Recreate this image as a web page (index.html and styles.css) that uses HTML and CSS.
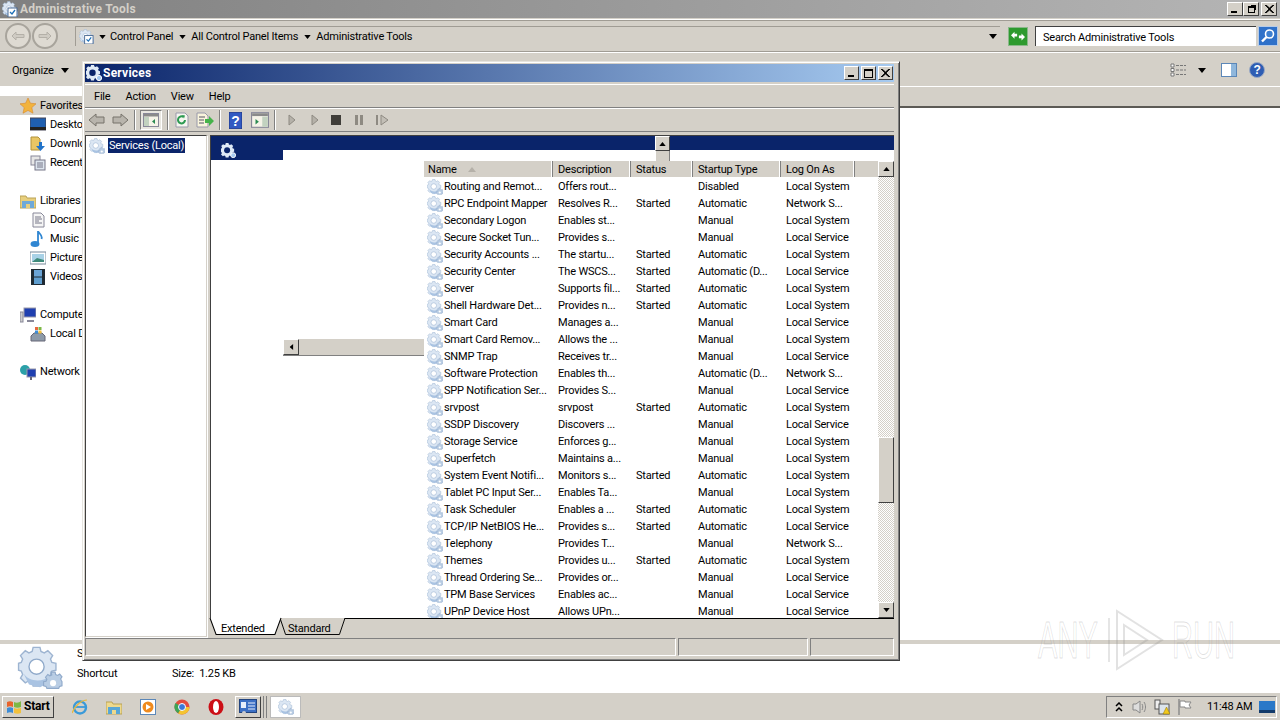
FILE: index.html
```html
<!DOCTYPE html>
<html lang="en">
<head>
<meta charset="utf-8">
<title>Administrative Tools</title>
<link rel="stylesheet" href="styles.css">
</head>
<body>
<svg class="defs" width="0" height="0" aria-hidden="true">
  <defs>
    <symbol id="gear" viewBox="0 0 32 32">
      <path fill="#dbe6f3" stroke="#9db4d1" stroke-width="1" d="M11 1h5l.7 3 2.400 1 2.600-1.600 3.500 3.500L23.600 9.500l1 2.400 3 .7v5l-3 .7-1 2.400 1.600 2.600-3.500 3.500-2.600-1.600-2.400 1-.7 3h-5l-.7-3-2.400-1-2.600 1.600-3.500-3.500L3.400 20.700l-1-2.400-2-.7v-5l2-.7 1-2.400L1.800 6.900l3.500-3.500L7.900 5l2.400-1z"/>
      <path d="M4 20c4 6 14 7 20 1l-2 6-6 3-8-2z" fill="#a9c3e2"/>
      <circle cx="13.500" cy="15" r="5.500" fill="#fff" stroke="#8fa9ca"/>
      <path fill="#b9cde4" stroke="#8fa9ca" stroke-width=".8" d="M24 19h3l.4 1.800 1.400.6 1.500-1 1.700 2-1 1.500.6 1.400L32 26v3l-1.800.4-.6 1.400H21l-.6-1.400-1.800-.4v-3l1.800-.4.600-1.400-1-1.500 1.700-2 1.500 1 1.400-.6z"/>
      <circle cx="25.500" cy="27" r="2.200" fill="#fff"/>
    </symbol>
    <symbol id="gear-white" viewBox="0 0 16 16">
      <path fill="#dfeaf6" d="M5 0h3l.4 1.600 1.200.5L11 1.200 13 3.200l-.9 1.400.5 1.200L14 6.200v3l-1.400.4-.5 1.200.9 1.400-2 2-1.400-.9-1.200.5L8 15.400H5l-.4-1.600-1.200-.5-1.400.9-2-2 .9-1.400-.5-1.200L-1 9.200v-3l1.600-.4.500-1.200-.9-1.400 2-2 1.400.9 1.200-.5z"/>
      <circle cx="6.500" cy="7.700" r="3.200" fill="#0a246a"/>
      <circle cx="13" cy="13" r="2.600" fill="#a6caf0" stroke="#fff"/>
    </symbol>
    <symbol id="tri-down" viewBox="0 0 8 5"><path d="M0 0h8L4 5z"/></symbol>
    <symbol id="cap-x" viewBox="0 0 9 8"><path d="M1 0l3.500 3L8 0h1L5 4l4 4H8L4.500 5 1 8H0l4-4-4-4z" stroke="#000" stroke-width=".8"/></symbol>
  </defs>
</svg>

<div class="explorer">
  <header class="ex-title">
    <svg class="ex-title-icon" viewBox="0 0 16 16"><use href="#gear"/><rect x="6" y="7" width="9" height="9" fill="#fff" stroke="#4a6a94"/><path d="M8 11l2 2 3-4" fill="none" stroke="#1d6fb8" stroke-width="1.300"/></svg>
    <span class="ex-title-text">Administrative Tools</span>
    <div class="ex-title-btns">
      <span class="cap-btn"><i class="cap-min"></i></span>
      <span class="cap-btn"><i class="cap-restore"></i></span>
      <span class="cap-btn cap-close"><svg class="cap-x-icon"><use href="#cap-x"/></svg></span>
    </div>
  </header>

  <div class="ex-address">
    <div class="nav-btns">
      <span class="round-btn"><svg viewBox="0 0 14 10"><path d="M1 5l4-4v2.500h8v3H5V9z" fill="#cfcbc3" stroke="#b4b0a8"/></svg></span>
      <span class="round-btn"><svg viewBox="0 0 14 10"><path d="M13 5L9 1v2.500H1v3h8V9z" fill="#cfcbc3" stroke="#b4b0a8"/></svg></span>
    </div>
    <div class="crumbs">
      <svg class="crumb-icon" viewBox="0 0 16 16"><use href="#gear"/><rect x="6" y="7" width="9" height="9" fill="#fff" stroke="#4a6a94"/><path d="M8 11l2 2 3-4" fill="none" stroke="#1d6fb8" stroke-width="1.300"/></svg>
      <svg class="tri"><use href="#tri-down"/></svg><span>Control Panel</span>
      <svg class="tri"><use href="#tri-down"/></svg><span>All Control Panel Items</span>
      <svg class="tri"><use href="#tri-down"/></svg><span>Administrative Tools</span>
      <svg class="tri tri-end"><use href="#tri-down"/></svg>
    </div>
    <span class="go-btn"><svg viewBox="0 0 18 16"><path d="M1 7l4-4v2.500h3v3H5V11zM17 9l-4 4v-2.500h-3v-3h3V5z" fill="#fff"/></svg></span>
    <div class="search-box">Search Administrative Tools</div>
    <span class="search-btn"><svg viewBox="0 0 16 16"><circle cx="9.500" cy="6" r="4" fill="#3d7fd0" stroke="#fff" stroke-width="1.600"/><path d="M6.500 9L2 13.500" stroke="#fff" stroke-width="2.400"/></svg></span>
  </div>

  <div class="ex-toolbar">
    <span class="organize">Organize</span><svg class="tri tri-org"><use href="#tri-down"/></svg>
    <div class="ex-tools">
      <svg class="view-icon" viewBox="0 0 16 14"><path d="M1 1h3v3H1zM1 5.500h3v3H1zM1 10h3v3H1z" fill="#fff" stroke="#777"/><path d="M6 2.500h10M6 7h10M6 11.500h10" stroke="#777" stroke-dasharray="3 1"/></svg>
      <svg class="tri"><use href="#tri-down"/></svg>
      <svg class="preview-icon" viewBox="0 0 16 14"><rect x=".5" y=".5" width="15" height="13" fill="#fff" stroke="#5b87b8"/><rect x="10" y="1" width="5" height="12" fill="#8fb7dc"/></svg>
      <svg class="help-icon" viewBox="0 0 16 16"><circle cx="8" cy="8" r="7.500" fill="#2e5db3" stroke="#9aa9c4"/><text x="8" y="12" text-anchor="middle" class="help-q">?</text></svg>
    </div>
  </div>

  <div class="ex-body">
    <nav class="ex-nav">
      <div class="nav-item nav-top nav-sel"><svg class="ni" viewBox="0 0 16 16"><path d="M8 0l2.400 5.200 5.600.6-4.200 3.800 1.200 5.600L8 12.400 3 15.200l1.200-5.600L0 5.800l5.600-.6z" fill="#f2b33d" stroke="#d8882a" stroke-width=".6"/></svg>Favorites</div>
      <div class="nav-item"><svg class="ni" viewBox="0 0 16 16"><rect y="1" width="16" height="12" fill="#1f5fb0" stroke="#445"/><rect y="10" width="16" height="3" fill="#222"/></svg>Desktop</div>
      <div class="nav-item"><svg class="ni" viewBox="0 0 16 16"><path d="M1 1h7l2 2v11H1z" fill="#e9c664" stroke="#b1923c"/><path d="M9 6h3v4h3l-4.500 5L6 10h3z" fill="#2273c9"/></svg>Downloads</div>
      <div class="nav-item"><svg class="ni" viewBox="0 0 16 16"><rect x="1" y="1" width="9" height="9" fill="#e6e6e6" stroke="#889"/><rect x="5" y="5" width="10" height="10" fill="#dde5ee" stroke="#778"/><path d="M7 8h6M7 10h6M7 12h6" stroke="#778"/></svg>Recent Places</div>

      <div class="nav-item nav-top nav-gap"><svg class="ni" viewBox="0 0 16 16"><path d="M0 3h6l1 2h9v10H0z" fill="#e8cf7d" stroke="#b9a257"/><path d="M2 8h12v7H2z" fill="#6fa9d9"/><path d="M6 15v-4h4v4" fill="#e8cf7d"/></svg>Libraries</div>
      <div class="nav-item"><svg class="ni" viewBox="0 0 16 16"><path d="M3 1h8l3 3v11H3z" fill="#f5f5f5" stroke="#889"/><path d="M5 5h6M5 7h7M5 9h4M5 11h7" stroke="#778"/></svg>Documents</div>
      <div class="nav-item"><svg class="ni" viewBox="0 0 16 16"><ellipse cx="5" cy="13" rx="4.500" ry="3" fill="#2f86d2"/><path d="M8 13V0c1 3 5 4 3.500 8" fill="none" stroke="#2f86d2" stroke-width="1.800"/></svg>Music</div>
      <div class="nav-item"><svg class="ni" viewBox="0 0 16 16"><rect y="2" width="16" height="12" fill="#fff" stroke="#789"/><rect x="2" y="4" width="12" height="8" fill="#a8d1e6"/><path d="M2 12l5-4 7 2v2z" fill="#3e8a7a"/></svg>Pictures</div>
      <div class="nav-item"><svg class="ni" viewBox="0 0 16 16"><rect x="1" width="14" height="16" fill="#1f2a33"/><rect x="4" y="1" width="8" height="6.500" fill="#6aa4d6"/><rect x="4" y="8.500" width="8" height="6.500" fill="#5f9ecf"/></svg>Videos</div>

      <div class="nav-item nav-top nav-gap"><svg class="ni" viewBox="0 0 16 16"><rect x="4" y="1" width="12" height="9" fill="#1f3fb0" stroke="#99a"/><rect x="0" y="5" width="3" height="10" fill="#ccc" stroke="#889"/><path d="M7 14h7" stroke="#889" stroke-width="2"/></svg>Computer</div>
      <div class="nav-item"><svg class="ni" viewBox="0 0 16 16"><path d="M1 10l3-3h8l3 3v5H1z" fill="#8d9aa8" stroke="#667"/><rect x="5" y="1" width="3" height="3" fill="#e8683c"/><rect x="8.500" y="1" width="3" height="3" fill="#7db845"/><rect x="5" y="4.500" width="3" height="3" fill="#3d8cd6"/><rect x="8.500" y="4.500" width="3" height="3" fill="#f2c13d"/></svg>Local Disk (C:)</div>

      <div class="nav-item nav-top nav-gap"><svg class="ni" viewBox="0 0 16 16"><circle cx="5" cy="6" r="5" fill="#2ba0a8"/><rect x="7" y="5" width="9" height="8" fill="#1f3fb0" stroke="#99a"/><path d="M11 13v3" stroke="#667" stroke-width="2"/></svg>Network</div>
    </nav>
    <div class="ex-files"><div class="ex-headbar"></div></div>
  </div>

  <div class="ex-split"></div>
  <div class="ex-details">
    <svg class="big-gear"><use href="#gear"/></svg>
    <div class="det-text">
      <div class="det-name">Services</div>
      <div class="det-meta"><span class="det-type">Shortcut</span><span>Size:&nbsp; 1.25 KB</span></div>
    </div>
  </div>
</div>

<footer class="taskbar">
  <span class="start"><svg viewBox="0 0 16 16"><path d="M1 3c2-1 4-1 6 0v5c-2-1-4-1-6 0z" fill="#e8632c"/><path d="M8 3c2 1 5 1 7-1v6c-2 1-5 1-7 0z" fill="#7db845"/><path d="M1 9c2-1 4-1 6 0v5c-2-1-4-1-6 0z" fill="#3d8cd6"/><path d="M8 9c2 1 5 1 7-.500V14c-2 1-5 1-7 0z" fill="#f2c13d"/></svg>Start</span>
  <div class="quick">
    <svg class="qi" viewBox="0 0 16 16"><circle cx="8" cy="8.500" r="6" fill="none" stroke="#3a9ad9" stroke-width="2.400"/><path d="M3 8h10" stroke="#3a9ad9" stroke-width="1.800"/><path d="M0 14C3 6 10 1 15 1" fill="none" stroke="#e8b93d" stroke-width="1.200"/></svg>
    <svg class="qi" viewBox="0 0 16 16"><path d="M0 3h6l1 2h9v10H0z" fill="#eed98d" stroke="#b9a257"/><path d="M2 8h12v7H2z" fill="#58a6d6"/><path d="M6 15v-4h4v4" fill="#eed98d"/></svg>
    <svg class="qi" viewBox="0 0 16 16"><rect x=".5" y=".5" width="15" height="15" fill="#fff" stroke="#5b87b8"/><circle cx="8" cy="8" r="5.500" fill="#ef8a1d"/><path d="M6 5l5 3-5 3z" fill="#fff"/></svg>
    <svg class="qi" viewBox="0 0 16 16"><circle cx="8" cy="8" r="7.500" fill="#e44c3d"/><path d="M8 8L15.500 8A7.500 7.500 0 0 1 4 14.300z" fill="#f4c430"/><path d="M8 8L4 14.300A7.500 7.500 0 0 1 1.500 4z" fill="#3da556"/><circle cx="8" cy="8" r="3.500" fill="#3b78d8" stroke="#fff"/></svg>
    <svg class="qi" viewBox="0 0 16 16"><ellipse cx="8" cy="8" rx="7.500" ry="8" fill="#cc0f16"/><ellipse cx="8" cy="8" rx="3" ry="6" fill="#fff"/></svg>
  </div>
  <span class="tb-raised"><svg viewBox="0 0 18 16"><rect x=".5" y=".5" width="17" height="13" fill="#3b6fc4" stroke="#22447f"/><rect x="2" y="3" width="5" height="6" fill="#e6eefb"/><path d="M9 4h7M9 7h7M9 10h7" stroke="#e6eefb"/><circle cx="5" cy="14" r="2" fill="#ccc"/></svg></span>
  <span class="tb-sep"></span>
  <span class="tb-active"><svg class="tb-gear"><use href="#gear"/></svg></span>
  <div class="tray">
    <svg class="tray-i tray-chev" viewBox="0 0 8 10"><path d="M1 4l3-3 3 3M1 9l3-3 3 3" fill="none" stroke="#000" stroke-width="1.500"/></svg>
    <svg class="tray-i" viewBox="0 0 16 16"><path d="M2 5h3l4-3v12l-4-3H2z" fill="#ddd" stroke="#888"/><path d="M11 5c1 2 1 4 0 6M13 3c2 3 2 7 0 10" fill="none" stroke="#888"/></svg>
    <svg class="tray-i" viewBox="0 0 16 16"><rect x="1" y="1" width="5" height="9" fill="#eee" stroke="#555"/><rect x="5" y="5" width="10" height="10" fill="#dce4ec" stroke="#555"/><path d="M9 15l3.500-7 3.500 7z" fill="#f2c91d" stroke="#8a6d00" stroke-width=".5"/></svg>
    <svg class="tray-i" viewBox="0 0 16 16"><path d="M2 0v16" stroke="#888" stroke-width="1.400"/><path d="M3 2h5v1h6l-2 3 2 3H8V8H3z" fill="#fff" stroke="#888"/></svg>
    <span class="clock">11:48 AM</span>
    <svg class="tray-show" viewBox="0 0 16 12"><rect width="16" height="12" fill="#2a78c8"/><rect y="9" width="16" height="3" fill="#123a6a"/></svg>
  </div>
</footer>

<div class="watermark">
  <span class="wm-box"><span class="wm-text">ANY</span></span>
  <svg class="wm-logo" viewBox="0 0 58 64"><path d="M10 3L55 32 10 61zM17 17l23 15-23 15z" fill="none" stroke="#8a8a8a" stroke-opacity=".25" stroke-width="2"/><path d="M2 10v44" stroke="#8a8a8a" stroke-opacity=".22" stroke-width="2"/></svg>
  <span class="wm-box"><span class="wm-text">RUN</span></span>
</div>

<section class="services">
  <header class="sv-title">
    <svg class="sv-title-icon"><use href="#gear-white"/></svg>
    <span class="sv-title-text">Services</span>
    <div class="sv-title-btns">
      <span class="cap-btn cap-sm"><i class="cap-min"></i></span>
      <span class="cap-btn cap-sm"><i class="cap-max"></i></span>
      <span class="cap-btn cap-sm cap-close"><svg class="cap-x-icon"><use href="#cap-x"/></svg></span>
    </div>
  </header>
  <div class="sv-menu"><span>File</span><span>Action</span><span>View</span><span>Help</span></div>
  <div class="sv-tools">
    <svg class="t16" viewBox="0 0 18 16"><path d="M1 8l7-6v3h8v6H8v3z" fill="#b8b4ac" stroke="#77736b"/></svg>
    <svg class="t16" viewBox="0 0 18 16"><path d="M17 8l-7-6v3H2v6h8v3z" fill="#b8b4ac" stroke="#77736b"/></svg>
    <span class="t-sep"></span>
    <span class="t-on"><svg class="t16" viewBox="0 0 16 14"><rect x=".5" y=".5" width="15" height="13" fill="#f5f3e8" stroke="#889"/><rect x="1" y="1" width="14" height="2.500" fill="#8a8a8a"/><rect x="1" y="4" width="5" height="9" fill="#c2d2c0"/><path d="M12 6l-3 2.500 3 2.500z" fill="#2b8a52"/></svg></span>
    <span class="t-sep"></span>
    <svg class="t16" viewBox="0 0 16 16"><path d="M2 1h9l3 3v11H2z" fill="#f6f6f0" stroke="#99a"/><path d="M11 8a3.500 3.500 0 1 1-1.500-3" fill="none" stroke="#2e9a52" stroke-width="2"/><path d="M8 3l3 .5-1 3z" fill="#2e9a52"/></svg>
    <svg class="t16" viewBox="0 0 18 16"><path d="M1 1h8l3 3v11H1z" fill="#f9f4dc" stroke="#99a"/><path d="M3 5h6M3 8h5M3 11h5" stroke="#556"/><path d="M9 7h4V4l5 5-5 5v-3H9z" fill="#45b34a"/></svg>
    <span class="t-sep"></span>
    <svg class="t-help" viewBox="0 0 14 18"><rect width="14" height="18" fill="#3159c2" stroke="#1c3480"/><text x="7" y="14.500" text-anchor="middle" class="t-q">?</text></svg>
    <svg class="t16" viewBox="0 0 16 14"><rect x=".5" y=".5" width="15" height="13" fill="#f5f3e8" stroke="#889"/><rect x="1" y="1" width="14" height="2.500" fill="#8a8a8a"/><rect x="10" y="4" width="5" height="9" fill="#c2d2c0"/><path d="M4 6l3 2.500-3 2.500z" fill="#2b8a52"/></svg>
    <span class="t-sep"></span>
    <svg class="t12 t-play1" viewBox="0 0 8 12"><path d="M1 1l6 5-6 5z" fill="#b5b1a9" stroke="#8e8a82"/></svg>
    <svg class="t12 t-play2" viewBox="0 0 8 12"><path d="M1 1l6 5-6 5z" fill="#b5b1a9" stroke="#8e8a82"/></svg>
    <span class="t-stop"></span>
    <svg class="t12 t-pause" viewBox="0 0 10 12"><path d="M1 1h3v10H1zM6 1h3v10H6z" fill="#8e8a82"/></svg>
    <svg class="t12 t-resume" viewBox="0 0 14 12"><path d="M1 1h2v10H1z" fill="#8e8a82"/><path d="M6 1l7 5-7 5z" fill="#c2beb6" stroke="#8e8a82"/></svg>
  </div>

  <div class="sv-main">
    <aside class="sv-tree">
      <svg class="row-gear"><use href="#gear"/></svg><span class="tree-sel">Services (Local)</span>
    </aside>
    <div class="sv-right">
      <div class="sv-content">
        <div class="sv-banner"></div>
        <div class="sv-split">
          <div class="sv-stub">
            <div class="stub-tab"><svg class="stub-gear"><use href="#gear-white"/></svg></div>
            <div class="hscroll"><span class="sb-btn"><svg class="sb-tri sb-left"><use href="#tri-down"/></svg></span><span class="hscroll-track"></span></div>
          </div>
          <div class="list">
            <div class="list-head">
              <span class="hc hc-name">Name<svg class="sort" viewBox="0 0 8 5"><path d="M0 5h8L4 0z"/></svg></span>
              <span class="hc hc-desc">Description</span>
              <span class="hc hc-status">Status</span>
              <span class="hc hc-start">Startup Type</span>
              <span class="hc hc-logon">Log On As</span>
              <span class="hc hc-fill"></span>
            </div>
            <div class="rows" id="rows"></div>
            <div class="vscroll">
              <span class="sb-btn"><svg class="sb-tri sb-up"><use href="#tri-down"/></svg></span>
              <span class="vtrack"><span class="vthumb"></span></span>
              <span class="sb-btn"><svg class="sb-tri"><use href="#tri-down"/></svg></span>
            </div>
          </div>
        </div>
        <div class="stub-vscroll"><span class="sb-btn"><svg class="sb-tri sb-up"><use href="#tri-down"/></svg></span><span class="stub-thumb"></span></div>
      </div>
      <div class="tabs">
        <span class="tab tab-on"><svg class="tab-shape" viewBox="0 0 70 17" preserveAspectRatio="none"><path d="M0 0L6 16.500H64L70 0" fill="#fff" stroke="#000"/></svg><span class="tab-label">Extended</span></span>
        <span class="tab tab-off"><svg class="tab-shape" viewBox="0 0 70 17" preserveAspectRatio="none"><path d="M0 0L6 16.500H64L70 0" fill="#d4d0c8" stroke="#000"/></svg><span class="tab-label">Standard</span></span>
      </div>
    </div>
  </div>
  <div class="sv-status"><span class="st st-a"></span><span class="st st-b"></span><span class="st st-c"></span></div>
</section>
<script src="rows.js"></script>
</body>
</html>
```
FILE: rows.js
```js
const data = [
["Routing and Remot...","Offers rout...","","Disabled","Local System"],
["RPC Endpoint Mapper","Resolves R...","Started","Automatic","Network S..."],
["Secondary Logon","Enables st...","","Manual","Local System"],
["Secure Socket Tun...","Provides s...","","Manual","Local Service"],
["Security Accounts ...","The startu...","Started","Automatic","Local System"],
["Security Center","The WSCS...","Started","Automatic (D...","Local Service"],
["Server","Supports fil...","Started","Automatic","Local System"],
["Shell Hardware Det...","Provides n...","Started","Automatic","Local System"],
["Smart Card","Manages a...","","Manual","Local Service"],
["Smart Card Remov...","Allows the ...","","Manual","Local System"],
["SNMP Trap","Receives tr...","","Manual","Local Service"],
["Software Protection","Enables th...","","Automatic (D...","Network S..."],
["SPP Notification Ser...","Provides S...","","Manual","Local Service"],
["srvpost","srvpost","Started","Automatic","Local System"],
["SSDP Discovery","Discovers ...","","Manual","Local Service"],
["Storage Service","Enforces g...","","Manual","Local System"],
["Superfetch","Maintains a...","","Manual","Local System"],
["System Event Notifi...","Monitors s...","Started","Automatic","Local System"],
["Tablet PC Input Ser...","Enables Ta...","","Manual","Local System"],
["Task Scheduler","Enables a ...","Started","Automatic","Local System"],
["TCP/IP NetBIOS He...","Provides s...","Started","Automatic","Local Service"],
["Telephony","Provides T...","","Manual","Network S..."],
["Themes","Provides u...","Started","Automatic","Local System"],
["Thread Ordering Se...","Provides or...","","Manual","Local Service"],
["TPM Base Services","Enables ac...","","Manual","Local Service"],
["UPnP Device Host","Allows UPn...","","Manual","Local Service"]
];
const host = document.getElementById("rows");
host.innerHTML = data.map(r =>
  `<div class="row"><svg class="row-gear"><use href="#gear"/></svg>` +
  r.map(c => `<span>${c}</span>`).join("") + `</div>`).join("");
```
FILE: styles.css
```css
* { box-sizing: border-box; }
html, body { margin: 0; height: 720px; overflow: hidden; }
body {
  position: relative;
  width: 1280px;
  background: #d4d0c8;
  font: 11px/13px Roboto, "Noto Sans", sans-serif;
  letter-spacing: -.2px;
  color: #000;
  display: flex;
  flex-direction: column;
}
.defs { position: absolute; }
svg { display: block; flex: none; }

.explorer { height: 692px; display: flex; flex-direction: column; }
.ex-title {
  height: 18px;
  display: flex;
  align-items: center;
  padding: 0 2px;
  background: linear-gradient(90deg, #808080, #b5b5b5);
}
.ex-title-icon { width: 16px; height: 16px; }
.ex-title-text { margin-left: 2px; font-weight: 700; font-size: 12px; color: #d4d0c8; letter-spacing: .25px; }
.ex-title-btns { margin-left: auto; display: flex; margin-right: 1px; }
.cap-btn {
  width: 16px; height: 14px;
  background: #d4d0c8;
  border: 1px solid;
  border-color: #fff #404040 #404040 #fff;
  position: relative;
  display: flex; align-items: center; justify-content: center;
}
.cap-close { margin-left: 2px; }
.cap-x-icon { width: 9px; height: 8px; }
.cap-min { position: absolute; left: 3px; bottom: 2px; width: 6px; height: 2px; background: #000; }
.cap-restore { width: 7px; height: 7px; border: 1px solid #000; border-top-width: 2px; box-shadow: 2px -2px 0 -1px #000; }
.cap-max { width: 9px; height: 9px; border: 1px solid #000; border-top-width: 2px; }

.ex-address {
  height: 34px;
  margin-top: 1px;
  display: flex;
  align-items: center;
  padding: 0 2px 0 5px;
  border-top: 1px solid #fff;
  border-bottom: 1px solid #fff;
  box-shadow: inset 0 1px 0 #a09c94, inset 0 -1px 0 #a09c94;
}
.nav-btns { display: flex; gap: 1px; width: 70px; }
.round-btn {
  width: 26px; height: 26px;
  border-radius: 50%;
  background: #dedad2;
  border: 2px solid #a8a49c;
  display: flex; align-items: center; justify-content: center;
}
.round-btn svg { width: 14px; height: 10px; }
.crumbs {
  flex: 1;
  height: 20px;
  display: flex;
  align-items: center;
  border-left: 1px solid #a09c94;
  border-top: 1px solid #a09c94;
  padding-left: 3px;
  margin-right: 8px;
}
.crumb-icon { width: 15px; height: 15px; margin-right: 5px; }
.tri { width: 7px; height: 4px; fill: #000; margin-right: 5px; }
.crumbs .crumb-icon + .tri { margin-right: 4px; margin-left: 0; }
.crumbs span + .tri { margin-left: 6px; margin-right: 5px; }
.crumbs span + .tri.tri-end { margin-left: auto; margin-right: 3px; width: 8px; height: 5px; }
.go-btn {
  width: 20px; height: 19px;
  background: #2e9a2e;
  border: 1px solid #8ab88a;
  display: flex; align-items: center; justify-content: center;
  margin-right: 7px;
}
.go-btn svg { width: 16px; height: 14px; }
.search-box {
  width: 221px; height: 20px;
  background: #fff;
  border-top: 1px solid #404040;
  border-left: 1px solid #404040;
  padding: 4px 0 0 7px;
}
.search-btn {
  width: 20px; height: 20px;
  margin-left: 2px;
  background: #2f71c9;
  border: 1px solid #b7cbe6;
  display: flex; align-items: center; justify-content: center;
}
.search-btn svg { width: 16px; height: 16px; }

.ex-toolbar {
  height: 32px;
  margin-top: 1px;
  display: flex;
  align-items: center;
  padding: 0 15px 0 12px;
}
.organize { margin-right: 7px; }
.tri-org { width: 8px; height: 5px; }
.ex-tools { margin-left: auto; display: flex; align-items: center; }
.ex-tools .tri { width: 8px; height: 5px; margin: 0 15px 0 12px; }
.view-icon { width: 16px; height: 14px; }
.preview-icon { width: 16px; height: 14px; margin-right: 12px; }
.help-icon { width: 16px; height: 16px; }
.help-q { font: 700 12px "Liberation Sans", sans-serif; fill: #fff; }

.ex-body { flex: 1; background: #fff; display: flex; overflow: hidden; }
.ex-nav { width: 120px; flex: none; padding-top: 10px; display: flex; flex-direction: column; }
.ex-files { flex: 1; }
.ex-headbar {
  height: 22px;
  background: #d4d0c8;
  border-top: 1px solid #fff;
  border-bottom: 2px solid #5c5a55;
}
.nav-item { height: 19px; flex: none; display: flex; align-items: center; padding-left: 30px; white-space: nowrap; }
.nav-top { padding-left: 20px; }
.nav-item .ni { width: 16px; height: 16px; margin-right: 4px; }
.nav-sel { background: #d4d0c8; width: 84px; }
.nav-gap { margin-top: 19px; }

.watermark {
  position: absolute;
  left: 1038px; top: 608px;
  height: 64px;
  display: flex; align-items: center;
  gap: 7px;
}
.wm-box { width: 62px; height: 64px; display: block; overflow: visible; }
.wm-text {
  display: block;
  font: 400 52px/64px "Liberation Sans", sans-serif;
  letter-spacing: 0;
  color: transparent;
  -webkit-text-stroke: 1px rgba(120, 120, 120, .24);
  white-space: nowrap;
  transform: scaleX(.56);
  transform-origin: 0 50%;
}
.wm-logo { width: 58px; height: 64px; }

.ex-split { height: 4px; flex: none; background: #d4d0c8; }
.ex-details { flex: none; height: 48px; background: #fff; display: flex; align-items: center; padding-left: 17px; }
.big-gear { width: 46px; height: 44px; }
.det-text { margin-left: 14px; align-self: flex-start; padding-top: 3px; display: flex; flex-direction: column; gap: 7px; }
.det-meta { display: flex; }
.det-type { width: 95px; }

.taskbar {
  height: 28px;
  display: flex;
  align-items: center;
  padding-left: 2px;
  border-top: 1px solid #fff;
}
.start {
  width: 52px; height: 22px;
  display: flex; align-items: center; gap: 2px;
  padding-left: 3px;
  font-weight: 700;
  font-size: 12px;
  background: #d4d0c8;
  border: 1px solid;
  border-color: #fff #404040 #404040 #fff;
}
.start svg { width: 16px; height: 16px; }
.quick { display: flex; gap: 18px; margin-left: 18px; width: 163px; }
.qi { width: 16px; height: 16px; }
.tb-raised {
  width: 26px; height: 22px;
  display: flex; align-items: center; justify-content: center;
  border: 1px solid;
  border-color: #fff #404040 #404040 #fff;
}
.tb-raised svg { width: 18px; height: 16px; }
.tb-sep { width: 4px; height: 22px; margin-left: 2px; border-left: 1px solid #808080; border-right: 1px solid #808080; }
.tb-active {
  width: 31px; height: 22px;
  margin-left: 3px;
  background: #fff;
  border: 1px solid #bbb;
  display: flex; align-items: center; justify-content: center;
}
.tb-gear { width: 16px; height: 16px; }
.tray {
  margin-left: auto;
  margin-right: 3px;
  width: 171px; height: 22px;
  display: flex; align-items: center;
  padding-left: 8px;
  border: 1px solid;
  border-color: #808080 #fff #fff #808080;
}
.tray-i { width: 16px; height: 16px; margin-right: 7px; }
.tray-chev { width: 8px; height: 10px; margin-right: 8px; }
.clock { margin-left: 7px; }
.tray-show { width: 16px; height: 12px; margin-left: auto; margin-right: 1px; }

.services {
  position: absolute;
  left: 82px; top: 61px;
  width: 818px; height: 600px;
  background: #d4d0c8;
  border: 1px solid;
  border-color: #e6e4de #404040 #404040 #e6e4de;
  box-shadow: inset 1px 1px 0 #fff, inset -1px -1px 0 #808080;
  padding: 2px 5px 3px 2px;
  display: flex;
  flex-direction: column;
}
.sv-title {
  height: 18px;
  flex: none;
  display: flex; align-items: center;
  padding-left: 1px;
  background: linear-gradient(90deg, #0a246a, #a6caf0);
}
.sv-title-icon { width: 16px; height: 16px; }
.sv-title-text { margin-left: 1px; color: #fff; font-weight: 700; font-size: 12px; letter-spacing: .25px; }
.sv-title-btns { margin-left: auto; display: flex; gap: 2px; margin-right: 1px; }
.cap-sm { width: 15px; height: 14px; }
.cap-sm.cap-close { margin-left: 0; }
.sv-menu {
  height: 24px;
  margin-top: 2px;
  flex: none;
  display: flex; align-items: center; gap: 15px;
  padding-left: 9px;
  border-top: 1px solid #fff;
  border-bottom: 1px solid #808080;
}
.sv-tools {
  height: 24px;
  flex: none;
  display: flex; align-items: center;
  padding-left: 3px;
  border-top: 1px solid #fff;
  border-bottom: 1px solid #808080;
}
.t16 { width: 18px; height: 16px; margin-right: 5px; }
.t-help { width: 13px; height: 17px; margin: 0 9px 0 4px; }
.t-q { font: 700 15px "Liberation Sans", sans-serif; fill: #fff; }
.t-sep { width: 2px; height: 20px; border-left: 1px solid #808080; border-right: 1px solid #fff; margin-right: 4px; }
.t-on { width: 22px; height: 20px; background: #e8e6e0; border: 1px solid; border-color: #808080 #fff #fff #808080; display: flex; align-items: center; justify-content: center; margin-right: 5px; }
.t-on .t16 { margin: 0; width: 16px; height: 14px; }
.t12 { height: 12px; }
.t-play1 { width: 8px; margin-left: 8px; margin-right: 15px; }
.t-play2 { width: 8px; margin-right: 12px; }
.t-stop { width: 10px; height: 10px; background: #403e3a; margin-right: 13px; }
.t-pause { width: 10px; margin-right: 11px; }
.t-resume { width: 14px; }

.sv-main { flex: 1; display: flex; min-height: 0; margin-top: 3px; }
.sv-tree {
  width: 122px;
  flex: none;
  height: 502px;
  background: #fff;
  border: 1px solid;
  border-color: #404040 #d4d0c8 #d4d0c8 #404040;
  box-shadow: 1px 1px 0 #fff;
  display: flex;
  align-items: flex-start;
  padding: 2px 0 0 3px;
}
.row-gear { width: 16px; height: 16px; flex: none; }
.tree-sel { margin-left: 3px; padding: 1px 1px; background: #0a246a; color: #fff; white-space: nowrap; }
.sv-right { flex: 1; min-width: 0; margin-left: 3px; display: flex; flex-direction: column; }
.sv-content {
  position: relative;
  flex: none;
  height: 483px;
  background: #fff;
  border-left: 1px solid #404040;
  border-top: 1px solid #404040;
  overflow: hidden;
}
.sv-banner { height: 14px; background: #0a246a; }
.sv-split { display: flex; height: 468px; }
.sv-stub { width: 213px; flex: none; }
.stub-tab { width: 72px; height: 10px; background: #0a246a; position: relative; }
.stub-gear { width: 15px; height: 15px; position: absolute; left: 10px; top: -7px; }
.hscroll {
  margin: 179px 0 0 72px;
  height: 17px;
  display: flex;
  background: #d4d0c8;
  border-bottom: 1px solid #808080;
}
.hscroll-track { flex: 1; }
.sb-btn {
  width: 16px; height: 16px;
  flex: none;
  background: #d4d0c8;
  border: 1px solid;
  border-color: #fff #404040 #404040 #fff;
  display: flex; align-items: center; justify-content: center;
}
.sb-tri { width: 7px; height: 4px; fill: #000; }
.sb-up { transform: rotate(180deg); }
.sb-left { transform: rotate(90deg); }
.list { flex: 1; min-width: 0; margin-top: 11px; position: relative; display: grid; grid-template-rows: 16px 1fr; overflow: hidden; }
.list-head { display: flex; background: #d4d0c8; padding-right: 16px; }
.hc {
  height: 16px;
  padding: 2px 0 0 4px;
  border-right: 1px solid #808080;
  box-shadow: inset -1px 0 0 #fff;
  position: relative;
  display: flex;
}
.hc-name { width: 129px; }
.hc-desc { width: 78px; padding-left: 5px; }
.hc-status { width: 62px; padding-left: 5px; }
.hc-start { width: 88px; padding-left: 5px; }
.hc-logon { width: 74px; padding-left: 5px; }
.hc-fill { flex: 1; border: 0; box-shadow: none; }
.sort { width: 8px; height: 5px; fill: #b5b1a9; margin: 4px 0 0 11px; }
.rows { overflow: hidden; padding: 1px 16px 0 0; min-height: 0; }
.row {
  height: 17px;
  display: grid;
  grid-template-columns: 17px 114px 78px 62px 88px 1fr;
  align-items: center;
  white-space: nowrap;
  padding-left: 3px;
}
.row span { display: block; }
.vscroll {
  position: absolute;
  right: 0; top: 0; bottom: 0;
  width: 16px;
  display: flex; flex-direction: column;
}
.vtrack {
  flex: 1;
  position: relative;
  background: repeating-conic-gradient(#d4d0c8 0 25%, #fff 0 50%) 0 0 / 2px 2px;
}
.vthumb {
  position: absolute;
  left: 0; right: 0; top: 260px; height: 66px;
  background: #d4d0c8;
  border: 1px solid;
  border-color: #fff #404040 #404040 #fff;
}
.stub-vscroll { position: absolute; left: 444px; top: 0; width: 15px; display: flex; flex-direction: column; }
.stub-vscroll .sb-btn { width: 15px; height: 15px; }
.stub-thumb { height: 10px; background: #d4d0c8; border-left: 1px solid #fff; border-right: 1px solid #808080; }

.tabs { height: 19px; flex: none; display: flex; padding-left: 0; border-top: 1px solid #000; }
.tab { height: 17px; position: relative; margin-top: -1px; flex: none; }
.tab-on { width: 71px; z-index: 1; }
.tab-off { width: 65px; margin-left: -1px; }
.tab-shape { position: absolute; inset: 0; width: 100%; height: 100%; overflow: visible; }
.tab-label { position: absolute; top: 4px; left: 11px; }
.tab-off .tab-label { left: 8px; }
.sv-status { height: 20px; margin-top: 1px; flex: none; display: flex; gap: 2px; padding-top: 1px; }
.st { height: 18px; border: 1px solid; border-color: #808080 #fff #fff #808080; }
.st-a { width: 591px; }
.st-b { width: 130px; }
.st-c { flex: 1; }
```
